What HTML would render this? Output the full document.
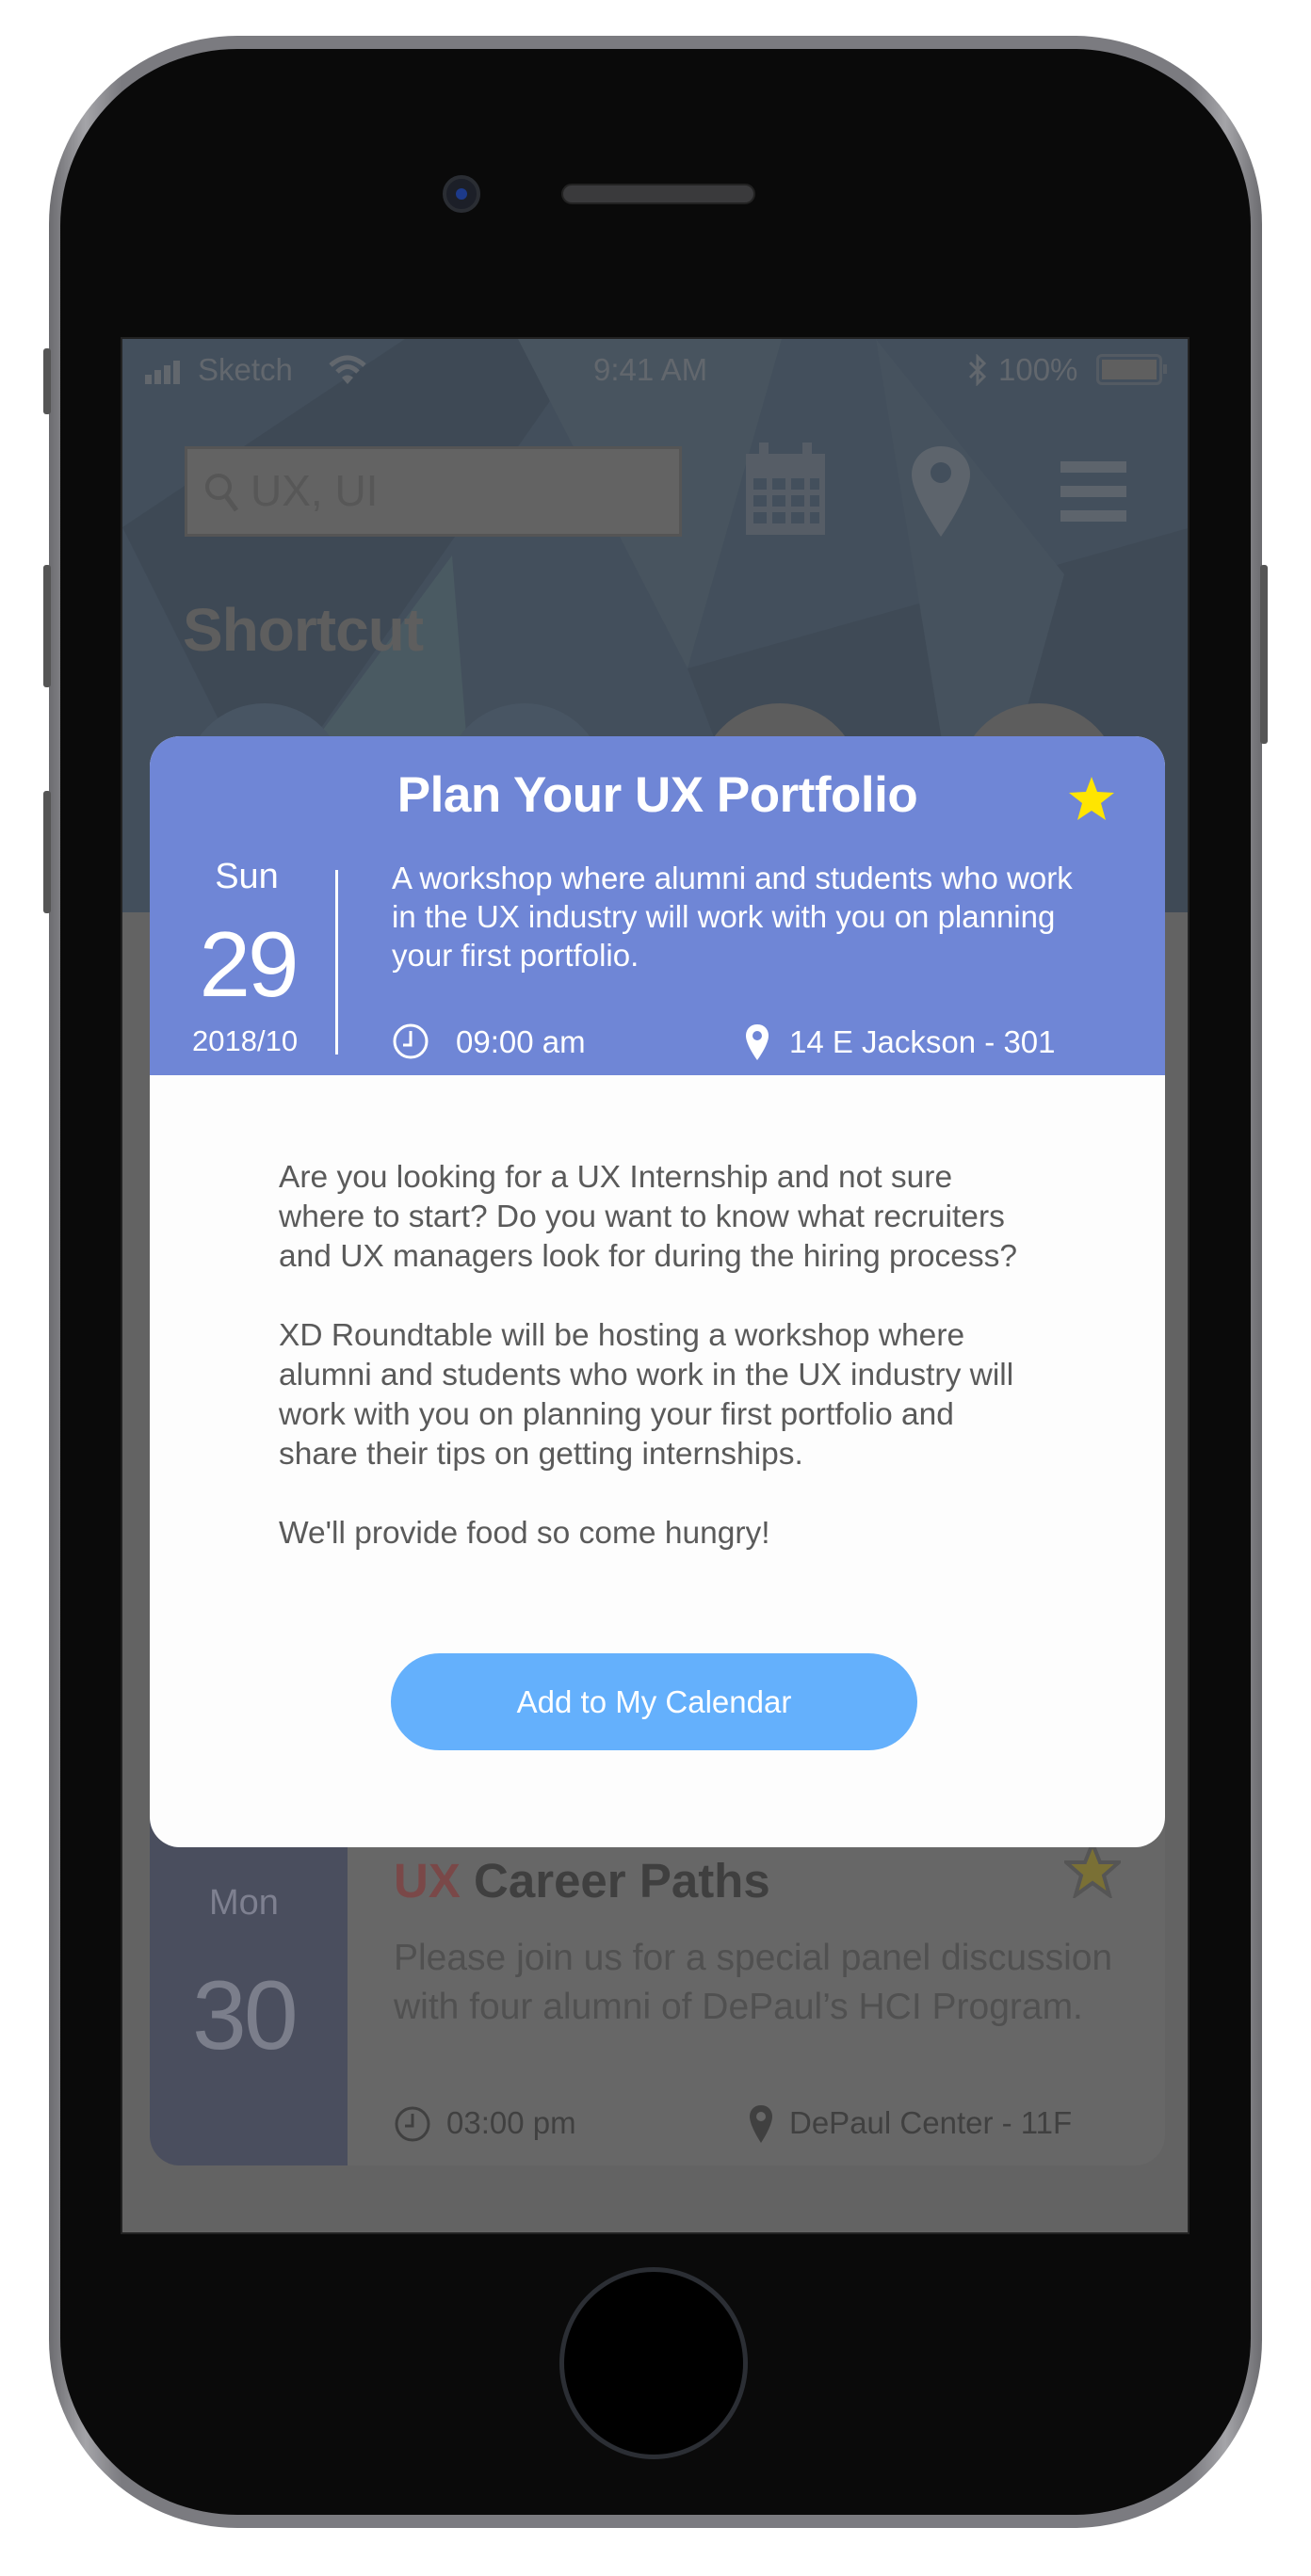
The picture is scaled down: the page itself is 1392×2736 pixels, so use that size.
<!DOCTYPE html>
<html><head><meta charset="utf-8"><style>
*{margin:0;padding:0;box-sizing:border-box}
body{width:1392px;height:2736px;background:#fff;position:relative;overflow:hidden;font-family:"Liberation Sans",Arial,sans-serif}
.a{position:absolute}
.phone{left:52px;top:38px;width:1288px;height:2647px;border-radius:200px;background:linear-gradient(90deg,#6c6c70,#a4a4a8 3%,#7b7b80 6%,#7b7b80 94%,#a4a4a8 97%,#6c6c70)}
.inner{left:64px;top:52px;width:1264px;height:2619px;border-radius:188px;background:#0a0a0a}
.screen{left:128px;top:358px;width:1135px;height:2015px;background:#636363;overflow:hidden;border:2px solid #222}
.t{white-space:nowrap}
</style></head><body>
<div class="a phone"></div>
<div class="a inner"></div>
<div class="a" style="left:46px;top:370px;width:8px;height:70px;background:#555;border-radius:3px"></div>
<div class="a" style="left:46px;top:600px;width:8px;height:130px;background:#555;border-radius:3px"></div>
<div class="a" style="left:46px;top:840px;width:8px;height:130px;background:#555;border-radius:3px"></div>
<div class="a" style="left:1338px;top:600px;width:8px;height:190px;background:#555;border-radius:3px"></div>
<div class="a" style="left:470px;top:186px;width:40px;height:40px;border-radius:50%;background:#1c1f28;border:4px solid #2a2d33"></div>
<div class="a" style="left:484px;top:200px;width:12px;height:12px;border-radius:50%;background:#1d3a8a"></div>
<div class="a" style="left:596px;top:195px;width:206px;height:22px;border-radius:11px;background:#3a3a3c;border:2px solid #222"></div>

<div class="a screen">
  <div class="a" style="left:0;top:0;width:1135px;height:609px;background:#434f5c"></div>
  <svg class="a" style="left:0;top:0" width="1135" height="609">
    <polygon points="0,200 300,0 500,0 150,500" fill="#3e4955"/>
    <polygon points="420,0 700,0 600,350" fill="#48545f"/>
    <polygon points="600,350 1135,200 1135,609 700,609" fill="#3f4a56"/>
    <polygon points="150,500 350,230 380,609 120,609" fill="#4a5a62"/>
    <polygon points="800,0 1000,250 900,609" fill="#46525e"/>
  </svg>
  <svg class="a" style="left:24px;top:20px" width="48" height="30"><rect x="0" y="18" width="7" height="10" fill="#62676d"/><rect x="10" y="13" width="7" height="15" fill="#62676d"/><rect x="20" y="8" width="7" height="20" fill="#62676d"/><rect x="30" y="3" width="7" height="25" fill="#62676d"/></svg>
  <div class="a t" style="left:80px;top:14px;font-size:33px;color:#62676d">Sketch</div>
  <svg class="a" style="left:218px;top:16px" width="42" height="32"><path d="M3 12 Q21 -4 39 12" stroke="#62676d" stroke-width="5" fill="none"/><path d="M10 19 Q21 8 32 19" stroke="#62676d" stroke-width="5" fill="none"/><path d="M15 25 L21 32 L27 25 Q21 20 15 25Z" fill="#62676d"/></svg>
  <div class="a t" style="left:500px;top:14px;font-size:33px;color:#62676d">9:41 AM</div>
  <svg class="a" style="left:896px;top:16px" width="24" height="34"><path d="M4 9 L19 24 L12 31 V3 L19 10 L4 25" stroke="#62676d" stroke-width="3" fill="none"/></svg>
  <div class="a t" style="left:930px;top:14px;font-size:33px;color:#62676d">100%</div>
  <div class="a" style="left:1034px;top:16px;width:70px;height:33px;border:3px solid #545b63;border-radius:6px;padding:3px"><div style="background:#5f5f5f;width:100%;height:100%"></div></div>
  <div class="a" style="left:1105px;top:27px;width:4px;height:10px;background:#545b63"></div>
  <div class="a" style="left:66px;top:114px;width:528px;height:96px;background:#636363;border:3px solid #555"></div>
  <svg class="a" style="left:86px;top:140px" width="40" height="46"><circle cx="16" cy="17" r="12" stroke="#565656" stroke-width="4" fill="none"/><path d="M24 27 L35 42" stroke="#565656" stroke-width="5"/></svg>
  <div class="a t" style="left:136px;top:134px;font-size:46px;color:#575757">UX, UI</div>
  <svg class="a" style="left:660px;top:110px" width="90" height="100"><rect x="2" y="12" width="84" height="86" fill="#565d66"/><rect x="16" y="0" width="10" height="22" fill="#565d66"/><rect x="62" y="0" width="10" height="22" fill="#565d66"/><g fill="#434f5c"><rect x="10" y="38" width="14" height="12"/><rect x="30" y="38" width="14" height="12"/><rect x="50" y="38" width="14" height="12"/><rect x="70" y="38" width="10" height="12"/><rect x="10" y="56" width="14" height="12"/><rect x="30" y="56" width="14" height="12"/><rect x="50" y="56" width="14" height="12"/><rect x="70" y="56" width="10" height="12"/><rect x="10" y="74" width="14" height="12"/><rect x="30" y="74" width="14" height="12"/><rect x="50" y="74" width="14" height="12"/><rect x="70" y="74" width="10" height="12"/></g></svg>
  <svg class="a" style="left:836px;top:112px" width="66" height="100"><path d="M33 2 C14 2 2 16 2 32 C2 54 33 98 33 98 C33 98 64 54 64 32 C64 16 52 2 33 2Z" fill="#5d646c"/><circle cx="33" cy="30" r="11" fill="#434f5c"/></svg>
  <div class="a" style="left:996px;top:130px;width:70px;height:12px;background:#5d646c"></div>
  <div class="a" style="left:996px;top:156px;width:70px;height:12px;background:#5d646c"></div>
  <div class="a" style="left:996px;top:182px;width:70px;height:12px;background:#5d646c"></div>
  <div class="a t" style="left:64px;top:272px;font-size:64px;font-weight:bold;color:#5e5e5e;letter-spacing:-1px">Shortcut</div>
  <div class="a" style="left:65px;top:387px;width:172px;height:172px;border-radius:50%;background:#485563"></div>
  <div class="a" style="left:341px;top:387px;width:172px;height:172px;border-radius:50%;background:#485563"></div>
  <div class="a" style="left:612px;top:387px;width:172px;height:172px;border-radius:50%;background:#5d5d5d"></div>
  <div class="a" style="left:887px;top:387px;width:172px;height:172px;border-radius:50%;background:#5d5d5d"></div>

  <div class="a" style="left:29px;top:1530px;width:1078px;height:410px;border-radius:32px;background:#676767;overflow:hidden">
    <div class="a" style="left:0;top:0;width:210px;height:410px;background:#4a4e5e"></div>
  </div>
  <div class="a t" style="left:92px;top:1640px;font-size:38px;color:#7e8090">Mon</div>
  <div class="a t" style="left:74px;top:1722px;font-size:104px;color:#7b7e8b;letter-spacing:-3px">30</div>
  <div class="a t" style="left:288px;top:1608px;font-size:51px;font-weight:bold;color:#3f3f3f"><span style="color:#7a4848">UX</span> Career Paths</div>
  <svg class="a" style="left:1000px;top:1596px" width="60" height="60"><polygon points="30,2 38,22 58,22 42,36 48,57 30,44 12,57 18,36 2,22 22,22" fill="#7a7035" stroke="#555" stroke-width="4"/></svg>
  <div class="a" style="left:288px;top:1694px;font-size:39px;line-height:52px;color:#505050">Please join us for a special panel discussion<br>with four alumni of DePaul’s HCI Program.</div>
  <svg class="a" style="left:288px;top:1876px" width="40" height="40"><circle cx="20" cy="20" r="17" stroke="#404040" stroke-width="3" fill="none"/><path d="M20 9 V22 H12" stroke="#404040" stroke-width="3" fill="none"/></svg>
  <div class="a t" style="left:344px;top:1876px;font-size:33px;color:#404040">03:00 pm</div>
  <svg class="a" style="left:664px;top:1874px" width="28" height="44"><path d="M14 2 C6 2 2 8 2 14 C2 24 14 42 14 42 C14 42 26 24 26 14 C26 8 22 2 14 2Z" fill="#404040"/><circle cx="14" cy="14" r="5" fill="#676767"/></svg>
  <div class="a t" style="left:708px;top:1876px;font-size:33px;color:#404040">DePaul Center - 11F</div>
</div>

<div class="a" style="left:159px;top:782px;width:1078px;height:1180px;border-radius:32px;background:#fdfdfd;overflow:hidden">
  <div class="a" style="left:0;top:0;width:1078px;height:360px;background:#6f86d6"></div>
</div>
<div class="a t" style="left:159px;top:814px;width:1078px;text-align:center;font-size:53px;font-weight:bold;color:#fff;letter-spacing:-0.5px">Plan Your UX Portfolio</div>
<svg class="a" style="left:1134px;top:824px" width="50" height="48"><polygon points="25,1 31,17 49,18 35,29 40,47 25,37 10,47 15,29 1,18 19,17" fill="#ffe500"/></svg>
<div class="a t" style="left:222px;top:910px;width:80px;text-align:center;font-size:38px;color:#fff">Sun</div>
<div class="a t" style="left:196px;top:968px;width:134px;text-align:center;font-size:98px;color:#fff;letter-spacing:-3px">29</div>
<div class="a t" style="left:204px;top:1088px;font-size:31px;color:#fff">2018/10</div>
<div class="a" style="left:356px;top:924px;width:3px;height:196px;background:#fff"></div>
<div class="a" style="left:416px;top:912px;font-size:33px;line-height:41px;color:#fff">A workshop where alumni and students who work<br>in the UX industry will work with you on planning<br>your first portfolio.</div>
<svg class="a" style="left:416px;top:1086px" width="40" height="40"><circle cx="20" cy="20" r="17" stroke="#fff" stroke-width="3" fill="none"/><path d="M20 9 V24 H12" stroke="#fff" stroke-width="3" fill="none"/></svg>
<div class="a t" style="left:484px;top:1088px;font-size:33px;color:#fff">09:00 am</div>
<svg class="a" style="left:790px;top:1086px" width="28" height="42"><path d="M14 2 C6 2 2 8 2 14 C2 24 14 40 14 40 C14 40 26 24 26 14 C26 8 22 2 14 2Z" fill="#fff"/><circle cx="14" cy="14" r="5" fill="#6f86d6"/></svg>
<div class="a t" style="left:838px;top:1088px;font-size:33px;color:#fff">14 E Jackson - 301</div>
<div class="a" style="left:296px;top:1230px;font-size:33.5px;line-height:42px;color:#5a5a5a">Are you looking for a UX Internship and not sure<br>where to start? Do you want to know what recruiters<br>and UX managers look for during the hiring process?<br><br>XD Roundtable will be hosting a workshop where<br>alumni and students who work in the UX industry will<br>work with you on planning your first portfolio and<br>share their tips on getting internships.<br><br>We'll provide food so come hungry!</div>
<div class="a" style="left:415px;top:1756px;width:559px;height:103px;border-radius:52px;background:#64b0fc;color:#fff;font-size:33px;text-align:center;line-height:103px">Add to My Calendar</div>

<div class="a" style="left:594px;top:2408px;width:200px;height:204px;border-radius:50%;border:5px solid #2b2e34;background:#000"></div>
</body></html>
